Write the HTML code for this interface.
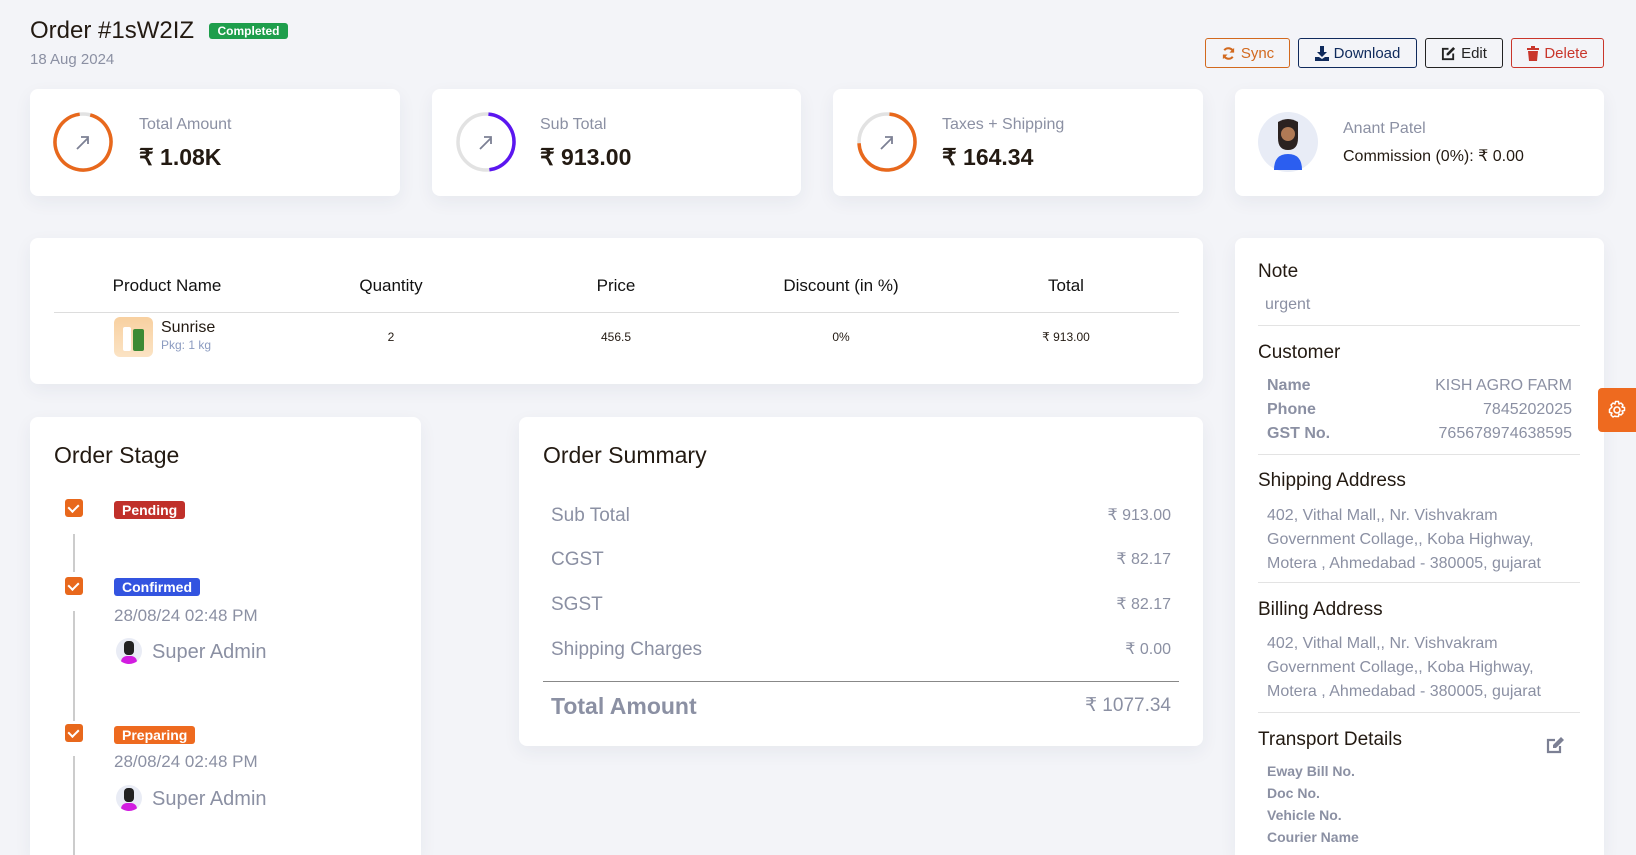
<!DOCTYPE html>
<html><head><meta charset="utf-8"><style>
*{box-sizing:border-box;margin:0;padding:0}
html,body{width:1636px;height:855px;overflow:hidden;background:#f3f4f8}
body{font-family:"Liberation Sans",sans-serif;color:#231a12}
#w{position:relative;width:1636px;height:855px;overflow:hidden}
.a{position:absolute;white-space:nowrap;line-height:1.2}
.card{position:absolute;background:#fff;border-radius:8px;box-shadow:0 6px 18px rgba(40,50,90,0.06)}
.g{color:#8b90a3}
.btn{position:absolute;top:38px;height:30px;border:1px solid;border-radius:3px;font-size:15px;display:flex;align-items:center;justify-content:center;gap:5px;background:transparent}
.th{font-size:17px;transform:translateX(-50%);font-weight:500;color:#111}
.td{font-size:12px;transform:translateX(-50%)}
.cb{position:absolute;left:65px;width:18px;height:18px;background:#e8681c;border-radius:3px}
.cb:after{content:"";position:absolute;left:5px;top:3px;width:5px;height:8px;border:solid #fff;border-width:0 2px 2px 0;transform:rotate(45deg)}
.bd{position:absolute;left:114px;height:18px;border-radius:3px;color:#fff;font-weight:700;font-size:14px;padding:0 8px;line-height:18px}
.vl{position:absolute;left:73px;width:2px;background:#ccc}
.av{position:absolute;width:26px;height:26px;border-radius:50%;background:#e9ecf5;overflow:hidden}
.rt{font-size:16px;font-weight:700;color:#8b90a3}
.rv{font-size:16px;color:#8b90a3}
.sr{font-size:19px;color:#8b90a3}
</style></head><body><div id="w">

<div class="a" style="left:30px;top:17px;font-size:24px;font-weight:500">Order #1sW2IZ</div>
<div class="a" style="left:209px;top:23px;height:16px;width:79px;background:#1e9e4c;color:#fff;font-size:12px;font-weight:700;border-radius:3px;text-align:center;line-height:16px">Completed</div>
<div class="a g" style="left:30px;top:51px;font-size:15px">18 Aug 2024</div>

<div class="btn" style="left:1205px;width:85px;border-color:#d2691e;color:#d2691e"><svg width="15" height="15" viewBox="0 0 16 16"><path d="M13 6A5.5 5.5 0 0 0 3.5 4.5M3 10a5.5 5.5 0 0 0 9.5 1.5" stroke="#d2691e" stroke-width="2.2" fill="none"/><path d="M14 2v5H9zM2 14V9h5z" fill="#d2691e"/></svg>Sync</div>
<div class="btn" style="left:1298px;width:119px;border-color:#0f2a5c;color:#0f2a5c"><svg width="14" height="15" viewBox="0 0 14 15"><path d="M5 0h4v6h3L7 11 2 6h3z" fill="#0f2a5c"/><path d="M0 11h4l3 2 3-2h4v4H0z" fill="#0f2a5c"/></svg>Download</div>
<div class="btn" style="left:1425px;width:78px;border-color:#222;color:#222"><svg width="15" height="15" viewBox="0 0 16 16"><path d="M8 3H2v11h11V8" stroke="#222" stroke-width="2" fill="none"/><path d="M13 1l2 2-7 7H6V8z" fill="#222"/></svg>Edit</div>
<div class="btn" style="left:1511px;width:93px;border-color:#c9362b;color:#c9362b"><svg width="12" height="15" viewBox="0 0 12 15"><path d="M0 2h12v2H0zM4 0h4v2H4zM1 5h10l-1 10H2z" fill="#c9362b"/></svg>Delete</div>

<div class="card" style="left:30px;top:89px;width:370px;height:107px"></div>
<div class="card" style="left:432px;top:89px;width:369px;height:107px"></div>
<div class="card" style="left:833px;top:89px;width:370px;height:107px"></div>
<div class="card" style="left:1235px;top:89px;width:369px;height:107px"></div>

<svg class="a" style="left:53px;top:112px" width="60" height="60" viewBox="0 0 60 60"><circle cx="30" cy="30" r="28" stroke="#e2e2e2" stroke-width="3.5" fill="none"/><circle cx="30" cy="30" r="28" stroke="#e8681c" stroke-width="3.5" fill="none" stroke-dasharray="165 176" transform="rotate(-75 30 30)"/><path d="M24 37L35 26M28 25h7v7" stroke="#7c8094" stroke-width="1.8" fill="none"/></svg>
<div class="a g" style="left:139px;top:115px;font-size:16px">Total Amount</div>
<div class="a" style="left:139px;top:144px;font-size:23px;font-weight:600">₹ 1.08K</div>

<svg class="a" style="left:456px;top:112px" width="60" height="60" viewBox="0 0 60 60"><circle cx="30" cy="30" r="28" stroke="#e2e2e2" stroke-width="3.5" fill="none"/><circle cx="30" cy="30" r="28" stroke="#5b16f0" stroke-width="3.5" fill="none" stroke-dasharray="82 176" transform="rotate(-85 30 30)"/><path d="M24 37L35 26M28 25h7v7" stroke="#7c8094" stroke-width="1.8" fill="none"/></svg>
<div class="a g" style="left:540px;top:115px;font-size:16px">Sub Total</div>
<div class="a" style="left:540px;top:144px;font-size:23px;font-weight:600">₹ 913.00</div>

<svg class="a" style="left:857px;top:112px" width="60" height="60" viewBox="0 0 60 60"><circle cx="30" cy="30" r="28" stroke="#e2e2e2" stroke-width="3.5" fill="none"/><circle cx="30" cy="30" r="28" stroke="#e8681c" stroke-width="3.5" fill="none" stroke-dasharray="128 176" transform="rotate(-85 30 30)"/><path d="M24 37L35 26M28 25h7v7" stroke="#7c8094" stroke-width="1.8" fill="none"/></svg>
<div class="a g" style="left:942px;top:115px;font-size:16px">Taxes + Shipping</div>
<div class="a" style="left:942px;top:144px;font-size:23px;font-weight:600">₹ 164.34</div>

<svg class="a" style="left:1258px;top:112px" width="61" height="60" viewBox="0 0 61 60"><ellipse cx="30" cy="30" rx="30" ry="30" fill="#e8ecf6"/><path d="M20 10q10-6 20 0v16q0 12-10 12t-10-12z" fill="#2b2220"/><circle cx="30" cy="22" r="7" fill="#b07a55"/><path d="M16 58q0-16 14-16t14 16z" fill="#2b5ef0"/></svg>
<div class="a g" style="left:1343px;top:119px;font-size:16px">Anant Patel</div>
<div class="a" style="left:1343px;top:147px;font-size:16px;font-weight:500">Commission (0%): ₹ 0.00</div>

<div class="card" style="left:30px;top:238px;width:1173px;height:146px"></div>
<div class="a th" style="left:167px;top:276px">Product Name</div>
<div class="a th" style="left:391px;top:276px">Quantity</div>
<div class="a th" style="left:616px;top:276px">Price</div>
<div class="a th" style="left:841px;top:276px">Discount (in %)</div>
<div class="a th" style="left:1066px;top:276px">Total</div>
<div class="a" style="left:54px;top:312px;width:1125px;height:1px;background:#ddd"></div>
<div class="a" style="left:114px;top:317px;width:39px;height:40px;border-radius:6px;background:linear-gradient(#f8d0a0,#fbe3c4)"><div style="position:absolute;left:9px;top:10px;width:8px;height:24px;background:#fff;border-radius:2px"></div><div style="position:absolute;left:19px;top:12px;width:11px;height:22px;background:#3c8a35;border-radius:2px"></div></div>
<div class="a" style="left:161px;top:318px;font-size:16px;font-weight:500">Sunrise</div>
<div class="a" style="left:161px;top:338px;font-size:12px;color:#8b9bc0">Pkg: 1 kg</div>
<div class="a td" style="left:391px;top:330px">2</div>
<div class="a td" style="left:616px;top:330px">456.5</div>
<div class="a td" style="left:841px;top:330px">0%</div>
<div class="a td" style="left:1066px;top:330px">₹ 913.00</div>

<div class="card" style="left:1235px;top:238px;width:369px;height:617px;border-radius:8px 8px 0 0"></div>
<div class="a" style="left:1258px;top:261px;font-size:19px;font-weight:500">Note</div>
<div class="a g" style="left:1265px;top:295px;font-size:16px">urgent</div>
<div class="a" style="left:1258px;top:325px;width:322px;height:1px;background:#e3e3e3"></div>
<div class="a" style="left:1258px;top:342px;font-size:19px;font-weight:500">Customer</div>
<div class="a rt" style="left:1267px;top:376px">Name</div><div class="a rv" style="right:64px;top:376px">KISH AGRO FARM</div>
<div class="a rt" style="left:1267px;top:400px">Phone</div><div class="a rv" style="right:64px;top:400px">7845202025</div>
<div class="a rt" style="left:1267px;top:424px">GST No.</div><div class="a rv" style="right:64px;top:424px">765678974638595</div>
<div class="a" style="left:1258px;top:454px;width:322px;height:1px;background:#e3e3e3"></div>
<div class="a" style="left:1258px;top:470px;font-size:19px;font-weight:500">Shipping Address</div>
<div class="a rv" style="left:1267px;top:504px;line-height:24px">402, Vithal Mall,, Nr. Vishvakram<br>Government Collage,, Koba Highway,<br>Motera , Ahmedabad - 380005, gujarat</div>
<div class="a" style="left:1258px;top:582px;width:322px;height:1px;background:#e3e3e3"></div>
<div class="a" style="left:1258px;top:599px;font-size:19px;font-weight:500">Billing Address</div>
<div class="a rv" style="left:1267px;top:632px;line-height:24px">402, Vithal Mall,, Nr. Vishvakram<br>Government Collage,, Koba Highway,<br>Motera , Ahmedabad - 380005, gujarat</div>
<div class="a" style="left:1258px;top:712px;width:322px;height:1px;background:#e3e3e3"></div>
<div class="a" style="left:1258px;top:729px;font-size:19px;font-weight:500">Transport Details</div>
<svg class="a" style="left:1546px;top:737px" width="19" height="17" viewBox="0 0 19 17"><path d="M9 3H2v12h12V9" stroke="#7c8094" stroke-width="2.2" fill="none"/><path d="M15 0l3 3-8 8H7V8z" fill="#7c8094"/></svg>
<div class="a" style="left:1267px;top:760px;font-size:14px;font-weight:700;color:#8b90a3;line-height:22px">Eway Bill No.<br>Doc No.<br>Vehicle No.<br>Courier Name</div>

<div class="a" style="left:1598px;top:388px;width:38px;height:44px;background:#ee6a1f;border-radius:4px 0 0 4px"><svg style="position:absolute;left:9px;top:12px" width="20" height="20" viewBox="0 0 20 20"><circle cx="10" cy="10" r="3" stroke="#fff" stroke-width="1.6" fill="none"/><path d="M8.5 1.5h3l.5 2.5 2-1 2 2-1 2 2.5.5v3l-2.5.5 1 2-2 2-2-1-.5 2.5h-3L8 16l-2 1-2-2 1-2-2.5-.5v-3L5 7 4 5l2-2 2 1z" stroke="#fff" stroke-width="1.5" fill="none" stroke-linejoin="round"/></svg></div>

<div class="card" style="left:30px;top:417px;width:391px;height:438px;border-radius:8px 8px 0 0"></div>
<div class="a" style="left:54px;top:442px;font-size:23px;font-weight:500">Order Stage</div>
<div class="cb" style="top:499px"></div>
<div class="bd" style="top:501px;background:#c0302a">Pending</div>
<div class="vl" style="top:534px;height:38px"></div>
<div class="cb" style="top:577px"></div>
<div class="bd" style="top:578px;background:#3354e0">Confirmed</div>
<div class="vl" style="top:611px;height:110px"></div>
<div class="a g" style="left:114px;top:606px;font-size:17px">28/08/24 02:48 PM</div>
<div class="av" style="left:116px;top:638px"><div style="position:absolute;left:8px;top:3px;width:10px;height:14px;background:#222;border-radius:4px"></div><div style="position:absolute;left:5px;top:18px;width:16px;height:10px;background:#d21ce0;border-radius:6px 6px 0 0"></div></div>
<div class="a g" style="left:152px;top:640px;font-size:20px">Super Admin</div>
<div class="cb" style="top:724px"></div>
<div class="bd" style="top:726px;background:#ee6a1f">Preparing</div>
<div class="vl" style="top:756px;height:99px"></div>
<div class="a g" style="left:114px;top:752px;font-size:17px">28/08/24 02:48 PM</div>
<div class="av" style="left:116px;top:785px"><div style="position:absolute;left:8px;top:3px;width:10px;height:14px;background:#222;border-radius:4px"></div><div style="position:absolute;left:5px;top:18px;width:16px;height:10px;background:#d21ce0;border-radius:6px 6px 0 0"></div></div>
<div class="a g" style="left:152px;top:787px;font-size:20px">Super Admin</div>

<div class="card" style="left:519px;top:417px;width:684px;height:329px"></div>
<div class="a" style="left:543px;top:442px;font-size:23px;font-weight:500">Order Summary</div>
<div class="a sr" style="left:551px;top:505px">Sub Total</div><div class="a rv" style="right:465px;top:506px">₹ 913.00</div>
<div class="a sr" style="left:551px;top:549px">CGST</div><div class="a rv" style="right:465px;top:550px">₹ 82.17</div>
<div class="a sr" style="left:551px;top:594px">SGST</div><div class="a rv" style="right:465px;top:595px">₹ 82.17</div>
<div class="a sr" style="left:551px;top:639px">Shipping Charges</div><div class="a rv" style="right:465px;top:640px">₹ 0.00</div>
<div class="a" style="left:543px;top:681px;width:636px;height:1px;background:#888"></div>
<div class="a" style="left:551px;top:693px;font-size:23px;font-weight:700;color:#8b90a3">Total Amount</div>
<div class="a" style="right:465px;top:695px;font-size:19px;color:#8b90a3">₹ 1077.34</div>
</div></body></html>
